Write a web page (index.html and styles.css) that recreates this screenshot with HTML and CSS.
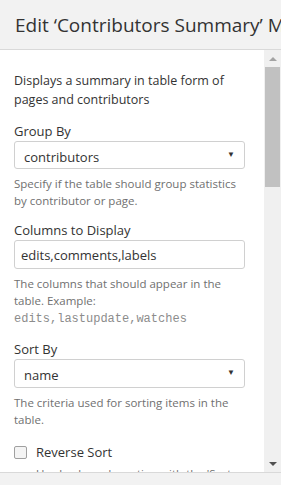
FILE: index.html
```
<!DOCTYPE html>
<html lang="en">
<head>
    <meta charset="UTF-8">
    <title>Edit Contributors Summary Macro</title>
    <link rel="stylesheet" href="styles.css">
</head>
<body>
    <div class="dialog">
        <div class="dialog-header">
            <h1>Edit ‘Contributors Summary’ Macro</h1>
        </div>

        <div class="dialog-body">
            <div class="content">
                <p class="desc">Displays a summary in table form of pages and contributors</p>

                <div class="field">
                    <label>Group By</label>
                    <div class="select select-first"><span>contributors</span><span class="caret">&#9660;</span></div>
                    <p class="help">Specify if the table should group statistics by contributor or page.</p>
                </div>

                <div class="field">
                    <label>Columns to Display</label>
                    <div class="text-input">edits,comments,labels</div>
                    <p class="help">The columns that should appear in the table. Example: <code>edits,lastupdate,watches</code></p>
                </div>

                <div class="field">
                    <label>Sort By</label>
                    <div class="select"><span>name</span><span class="caret">&#9660;</span></div>
                    <p class="help">The criteria used for sorting items in the table.</p>
                </div>

                <div class="field check-field">
                    <div class="check-row"><span class="checkbox"></span><span>Reverse Sort</span></div>
                    <p class="help check-help">Use backwards sorting with the 'Sort By' option.</p>
                </div>
            </div>

            <div class="scrollbar">
                <div class="sb-btn"><span class="arrow-up"></span></div>
                <div class="sb-track"><div class="sb-thumb"></div></div>
                <div class="sb-btn"><span class="arrow-down"></span></div>
            </div>
        </div>

        <div class="dialog-footer"></div>
    </div>
</body>
</html>
```

FILE: styles.css
```
body { margin: 0; background: #fff; font-family: 'Open Sans', 'Noto Sans', sans-serif; color: #333; overflow: hidden; }
.dialog { width: 281px; height: 485px; display: flex; flex-direction: column; }

.dialog-header { height: 49px; background: #f2f2f2; border-bottom: 1px solid #d9d9d9; display: flex; align-items: center; padding-left: 15px; overflow: hidden; white-space: nowrap; }
.dialog-header h1 { margin: 0; font-size: 19px; font-weight: normal; color: #333; }

.dialog-body { flex: 1; display: flex; overflow: hidden; }
.content { flex: 1; padding: 21px 19px 0 14px; overflow: hidden; }

.desc { margin: 0 0 12px; font-size: 12.5px; line-height: 19px; }
.field { margin-bottom: 11px; }
label { display: block; font-size: 13px; line-height: 20px; }

.select, .text-input { height: 27px; border: 1px solid #d0d0d0; border-radius: 3px; display: flex; align-items: center; font-size: 13px; }
.select-first { height: 26px; }
.select { padding: 0 9px; justify-content: space-between; }
.select span:first-child { padding-top: 3px; }
.text-input { padding: 0 6px; }
.caret { font-size: 8px; color: #333; margin-top: -4px; }

.help { margin: 6px 0 0; font-size: 11.5px; line-height: 17px; color: #707070; }
code { font-family: 'Liberation Mono', 'DejaVu Sans Mono', monospace; font-size: 12px; color: #8c8c8c; }

.check-field { margin-top: 14px; }
.check-row { display: flex; align-items: center; gap: 9px; font-size: 13px; line-height: 20px; }
.checkbox { width: 11px; height: 11px; border: 1px solid #a0a0a0; border-radius: 2px; background: #f4f4f4; }
.check-help { padding-left: 22px; margin-top: 3px; }

.scrollbar { width: 17px; background: #f0f0f0; display: flex; flex-direction: column; }
.sb-btn { height: 17px; display: flex; align-items: center; justify-content: center; }
.sb-track { flex: 1; padding: 0 1px; }
.sb-thumb { height: 120px; background: #c1c1c1; }
.arrow-up { width: 0; height: 0; border-left: 4px solid transparent; border-right: 4px solid transparent; border-bottom: 4px solid #a3a3a3; }
.arrow-down { width: 0; height: 0; border-left: 4px solid transparent; border-right: 4px solid transparent; border-top: 4px solid #505050; }

.dialog-footer { height: 12px; background: #f2f2f2; border-top: 1px solid #d9d9d9; }
```
